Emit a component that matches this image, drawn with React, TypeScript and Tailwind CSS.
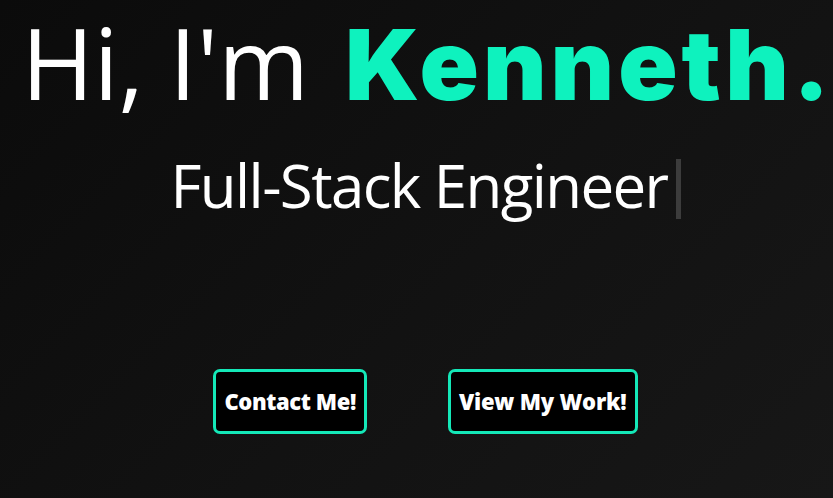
export default function App() {
  return (
    <div className="w-[833px] h-[498px] overflow-hidden bg-[linear-gradient(135deg,#0b0b0b_0%,#121212_55%,#171717_100%)] flex flex-col items-center pl-[18px] text-white">
      <h1 className="mt-[7px] whitespace-nowrap text-[98px] leading-[110px] font-['Open_Sans',sans-serif] font-normal tracking-[0px]">
        Hi, I'm
        <span className="ml-[36px] text-[#0ef2be] font-['Inter',sans-serif] font-black tracking-[4px] mr-[-4px]">Kenneth.</span>
      </h1>
      <div className="mt-[35px] flex items-start h-[60px]">
        <span className="text-[60px] leading-[60px] font-['Open_Sans',sans-serif] font-normal tracking-[-1.6px]">Full-Stack Engineer</span>
        <span className="ml-[8px] mt-[4px] w-[5px] h-[60px] bg-[#3c3c3c]" />
      </div>
      <div className="mt-[154px] flex gap-[81px]">
        <button className="h-[65px] px-[8px] rounded-[7px] border-[3px] border-[#14e8b8] bg-black text-[22px] font-extrabold font-['Open_Sans',sans-serif] text-white tracking-[-0.4px]">
          Contact Me!
        </button>
        <button className="h-[65px] px-[8px] rounded-[7px] border-[3px] border-[#14e8b8] bg-black text-[22px] font-extrabold font-['Open_Sans',sans-serif] text-white tracking-[-0.2px]">
          View My Work!
        </button>
      </div>
    </div>
  );
}
